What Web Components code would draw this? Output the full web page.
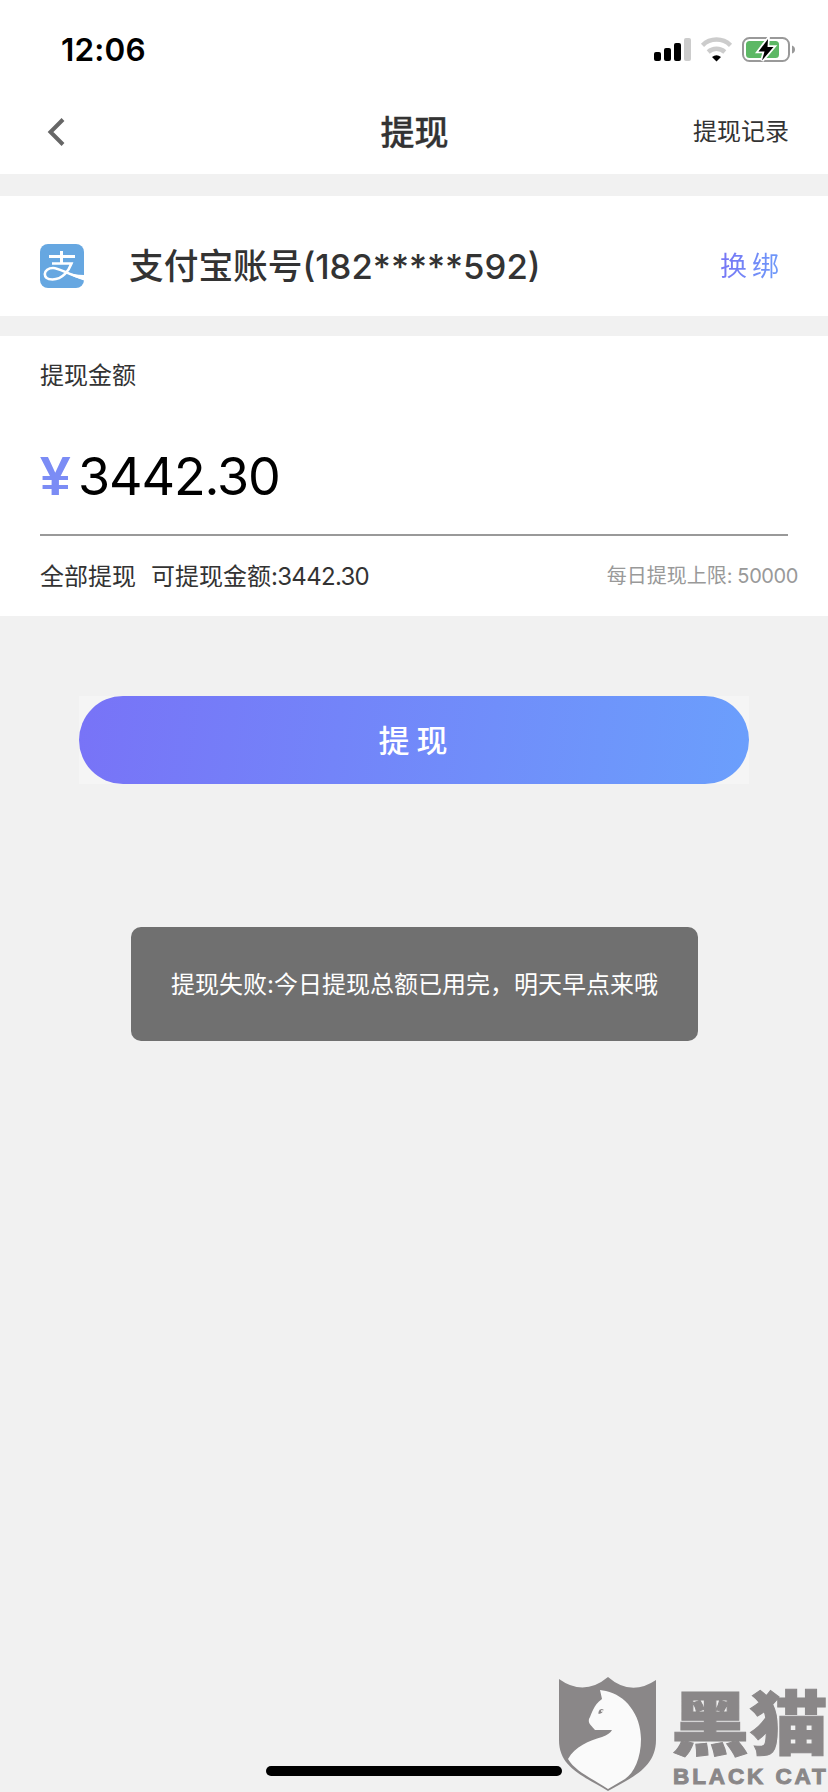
<!DOCTYPE html>
<html lang="zh-CN">
<head>
<meta charset="utf-8">
<title>提现</title>
<style>
body { margin: 0; background: #f1f1f1; font-family: Inter, "Noto Sans CJK SC", sans-serif; color: #333; }
</style>
</head>
<body>
<withdraw-page></withdraw-page>
<script>
const define = (name, html) => {
  const template = document.createElement('template');
  template.innerHTML = html;
  customElements.define(name, class extends HTMLElement {
    constructor() {
      super();
      this.attachShadow({ mode: 'open' }).append(template.content.cloneNode(true));
    }
  });
};

define('status-bar', `
<style>
:host { display: flex; height: 90px; box-sizing: border-box; padding: 10px 33px 0 61px; align-items: center; justify-content: space-between; color: #000; }
.time { font-size: 31.5px; font-weight: 600; line-height: 40px; letter-spacing: .2px; }
svg { display: block; width: 142px; height: 30px; }
</style>
<span class="time">12:06</span>
<svg viewBox="652 35 142 30">
  <g fill="#000"><rect x="653" y="52" width="7" height="9" rx="2"/><rect x="663" y="48" width="7" height="13" rx="2"/><rect x="673" y="43" width="7" height="18" rx="2"/></g>
  <rect x="683" y="38" width="7" height="23" rx="2" fill="#ccc"/>
  <g fill="none" stroke="#ccc" stroke-width="4.5"><path d="M701.5 45.3a20 20 0 0 1 28 0"/><path d="M707.2 52a12.5 12.5 0 0 1 16.6 0"/></g>
  <path d="M711 57Q715.500 53.500 720 57L715.500 61.500Z"/>
  <rect x="742" y="38" width="46" height="23" rx="6.500" fill="#fff" stroke="#999" stroke-width="2"/>
  <path d="M791 45.500q3 1 3 4t-3 4z" fill="#999"/>
  <rect x="745" y="41" width="33" height="17" rx="3.500" fill="#5db865"/>
  <path d="M767 39L757.500 51.500h6L761 60.500l11.500-13.500h-6z" fill="#000" stroke="#fff" stroke-width="3.500" paint-order="stroke"/>
</svg>`);

define('nav-bar', `
<style>
:host { display: grid; grid-template-columns: 1fr auto 1fr; align-items: center; height: 84px; padding: 0 39px 0 46px; box-sizing: border-box; }
svg { width: 20px; height: 30px; }
.title { font-size: 34px; line-height: 40px; font-weight: 500; margin-left: -6px; position: relative; top: 1px; -webkit-text-stroke: .300px #333; }
.action { font-size: 24px; line-height: 30px; text-align: right; }
</style>
<svg viewBox="0 0 20 30"><path d="M17 2.500L4.500 15 17 27.500" fill="none" stroke="#666" stroke-width="4"/></svg>
<span class="title"><slot></slot></span>
<span class="action"><slot name="action"></slot></span>`);

define('account-card', `
<style>
:host { display: flex; height: 120px; margin-top: 22px; padding: 20px 44px 0 40px; box-sizing: border-box; align-items: center; background: #fff; }
svg { width: 44px; height: 44px; flex: none; }
.account { flex: 1; margin-left: 45px; font-size: 34.700px; line-height: 44px; font-weight: 500; white-space: nowrap; }
.bind { margin-top: 2px; font-size: 27px; line-height: 40px; letter-spacing: 5px; background: linear-gradient(100deg, #7873f5, #6c9ffa); background-clip: text; -webkit-background-clip: text; color: transparent; }
</style>
<svg viewBox="0 0 44 44">
  <rect width="44" height="44" rx="8" fill="#66a7e1"/>
  <g fill="none" stroke="#fff"><path d="M9 12.500H35M21.500 7V19" stroke-width="3"/><path d="M12 19.500H31.500C29 26 23 35.500 12.500 35.500 6.500 35.500 4.800 32.500 4.800 30 4.800 26.500 8.500 24 13 24 20 24 28 31 44 34.500" stroke-width="2.600"/></g>
  <path d="M25 28Q33 30.500 44 31V36.500Q34 33.500 25 28" fill="#fff"/>
</svg>
<span class="account"><slot></slot></span>
<span class="bind"><slot name="action"></slot></span>`);

define('amount-card', `
<style>
:host { display: flex; flex-direction: column; height: 280px; margin-top: 20px; padding: 22px 40px 0; box-sizing: border-box; background: #fff; }
.label { font-size: 24px; line-height: 36px; }
.amount { display: flex; align-items: baseline; height: 142px; box-sizing: border-box; padding-top: 47px; border-bottom: 2px solid #999; color: #000; font-size: 52px; line-height: 70px; letter-spacing: -1.100px; }
.yen { width: 38px; font: bold 55px/70px "Liberation Sans", sans-serif; color: #7b8cf5; }
.foot { display: flex; align-items: center; height: 76px; margin-right: -10px; font-size: 24px; white-space: nowrap; }
.available { margin-left: 15px; }
.number { letter-spacing: -.700px; }
.limit { margin-left: auto; font-size: 20px; color: #999; }
.limit .number { letter-spacing: -.400px; }
</style>
<span class="label">提现金额</span>
<div class="amount"><span class="yen">¥</span><span><slot></slot></span></div>
<div class="foot"><span>全部提现</span><span class="available">可提现金额<span class="number">:3442.30</span></span><span class="limit">每日提现上限<span class="number">: 50000</span></span></div>`);

define('submit-button', `
<style>
:host { display: block; margin: 80px 79px 0; background: #f5f5f5; }
button { display: block; width: 100%; height: 88px; border: 0; border-radius: 44px; padding: 0 0 2px 5px; background: linear-gradient(98deg, #7873f7, #6b9ffc); color: #fff; font: 500 31px/40px "Noto Sans CJK SC", sans-serif; letter-spacing: 7px; }
</style>
<button><slot></slot></button>`);

define('toast-message', `
<style>
:host { display: flex; width: 567px; height: 114px; margin: 143px auto 0 131px; padding-bottom: 4px; box-sizing: border-box; align-items: center; justify-content: center; border-radius: 10px; background: #707070; color: #fff; font-size: 24px; white-space: nowrap; }
</style>
<span><slot></slot></span>`);

define('home-indicator', `
<style>
:host { position: absolute; left: 266px; top: 1766px; width: 296px; height: 10px; border-radius: 5px; background: #000; }
</style>`);

define('brand-watermark', `
<style>
:host { position: absolute; left: 558px; top: 1676px; width: 270px; height: 116px; display: flex; color: #8a8788; }
svg { width: 98px; height: 116px; flex: none; }
.words { display: flex; flex-direction: column; align-items: flex-start; margin-left: 15px; white-space: nowrap; }
.zh { font: 900 70px/70px "Noto Sans CJK SC", sans-serif; margin-top: 9px; transform: scaleX(1.120); transform-origin: 0 0; -webkit-text-stroke: 1px #8a8788; }
.en { font: bold 22.500px/24px "Liberation Sans", sans-serif; margin: 10px 0 0 2px; letter-spacing: 2.900px; -webkit-text-stroke: 1px #8a8788; }
</style>
<svg viewBox="558 1676 98 116">
  <path d="M559 1679Q584 1697 608 1677Q631 1697 656 1680V1740C656 1768 631 1778 608 1791C584 1776 559 1768 559 1740Z" fill="#8a8788"/>
  <path d="M600 1690L606 1691C625 1695 641 1714 641 1739C641 1758 634 1773 625 1779L608 1789C591 1778 575 1771 568 1759C575 1746 589 1741 602 1737Q610 1734 612 1730H595C591 1725 588 1724 589 1719C592 1714 593 1705 602 1699Z" fill="#fafafa"/>
  <path d="M598.500 1712q1-4 5-2.500-.500 4-5 4.500z" fill="#8a8788"/><circle cx="602" cy="1711" r="1" fill="#fafafa"/>
</svg>
<div class="words"><span class="zh">黑猫</span><span class="en">BLACK CAT</span></div>`);

define('withdraw-page', `
<style>
:host { display: block; position: relative; height: 1792px; overflow: hidden; background: #f1f1f1; }
header { background: #fff; }
</style>
<header><status-bar></status-bar><nav-bar>提现<span slot="action">提现记录</span></nav-bar></header>
<account-card>支付宝账号(182*****592)<span slot="action">换绑</span></account-card>
<amount-card>3442.30</amount-card>
<submit-button>提现</submit-button>
<toast-message>提现失败:今日提现总额已用完，明天早点来哦</toast-message>
<home-indicator></home-indicator>
<brand-watermark></brand-watermark>`);
</script>
</body>
</html>
